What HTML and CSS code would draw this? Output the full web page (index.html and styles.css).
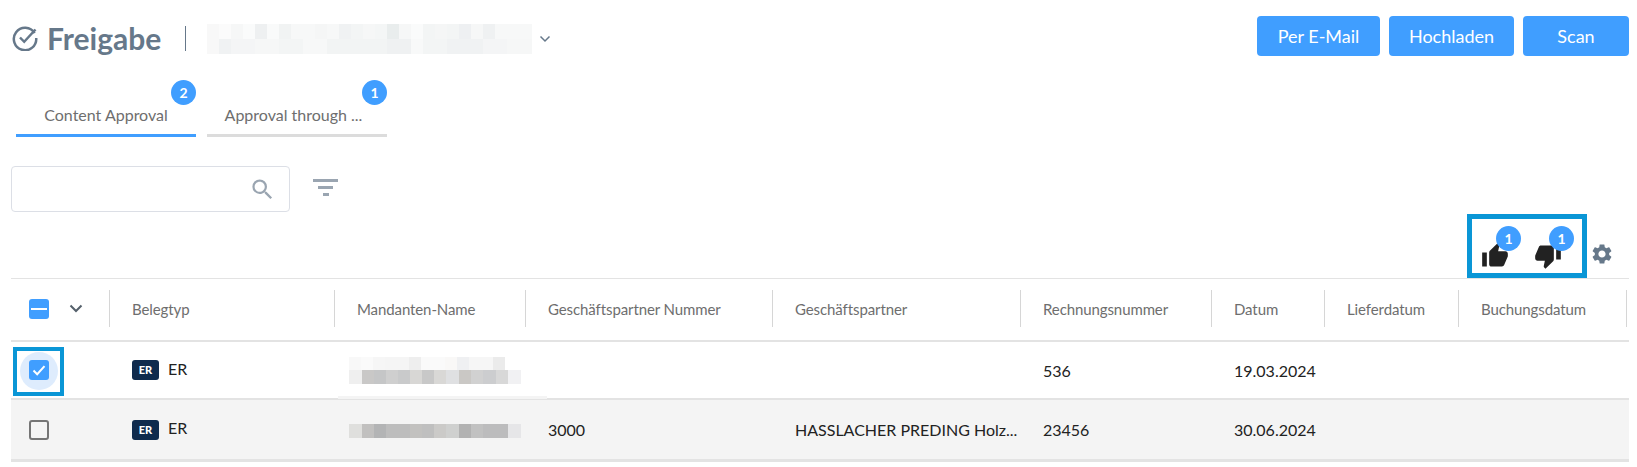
FILE: index.html
```html
<!doctype html>
<html>
<head>
<meta charset="utf-8">
<title>Freigabe</title>
<link rel="stylesheet" href="styles.css">
</head>
<body>

<header class="topbar">
    <svg class="title-icon" viewBox="0 0 26 26"><path d="M22.6 8.2A11.2 11.2 0 1 0 24.2 13"/><path d="M8 12.5l4.2 4.3L23.5 4.5"/></svg>
    <h1>Freigabe</h1>
    <span class="title-sep"></span>
    <span class="blur blur-title"></span>
    <svg class="title-chevron" viewBox="0 0 12 8"><path d="M1.5 1.5L6 6l4.5-4.5"/></svg>
    <div class="actions">
        <button class="btn btn-mail">Per E-Mail</button>
        <button class="btn btn-upload">Hochladen</button>
        <button class="btn btn-scan">Scan</button>
    </div>
</header>

<nav class="tabs">
    <div class="tab active">Content Approval<span class="badge">2</span></div>
    <div class="tab">Approval through ...<span class="badge">1</span></div>
</nav>

<section class="filters">
    <div class="search">
        <svg class="search-icon" viewBox="0 0 24 24"><path d="M15.5 14h-.79l-.28-.27A6.47 6.47 0 0 0 16 9.5 6.5 6.5 0 1 0 9.5 16c1.61 0 3.09-.59 4.23-1.57l.27.28v.79l5 4.99L20.49 19l-4.99-5zm-6 0C7.01 14 5 11.99 5 9.5S7.01 5 9.5 5 14 7.01 14 9.5 11.99 14 9.5 14z"/></svg>
    </div>
    <div class="filter-icon"><span></span><span></span><span></span></div>
</section>

<section class="toolbar">
    <div class="vote-box">
        <div class="vote">
            <svg viewBox="0 0 24 24"><path d="M1 21h4V9H1v12zm22-11c0-1.1-.9-2-2-2h-6.31l.95-4.57.03-.32c0-.41-.17-.79-.44-1.06L14.17 1 7.59 7.59C7.22 7.95 7 8.45 7 9v10c0 1.1.9 2 2 2h9c.83 0 1.54-.5 1.84-1.22l3.02-7.05c.09-.23.14-.47.14-.73v-2z"/></svg>
            <span class="badge">1</span>
        </div>
        <div class="vote">
            <svg viewBox="0 0 24 24"><path d="M15 3H6c-.83 0-1.54.5-1.84 1.22l-3.02 7.05c-.09.23-.14.47-.14.73v2c0 1.1.9 2 2 2h6.31l-.95 4.57-.03.32c0 .41.17.79.44 1.06L9.83 23l6.59-6.59c.36-.36.58-.86.58-1.41V5c0-1.1-.9-2-2-2zm4 0v12h4V3h-4z"/></svg>
            <span class="badge">1</span>
        </div>
    </div>
    <svg class="gear" viewBox="0 0 24 24"><path d="M19.14 12.94c.04-.3.06-.61.06-.94 0-.32-.02-.64-.07-.94l2.03-1.58c.18-.14.23-.41.12-.61l-1.92-3.32c-.12-.22-.37-.29-.59-.22l-2.39.96c-.5-.38-1.03-.7-1.62-.94l-.36-2.54c-.04-.24-.24-.41-.48-.41h-3.84c-.24 0-.43.17-.47.41l-.36 2.54c-.59.24-1.13.57-1.62.94l-2.39-.96c-.22-.08-.47 0-.59.22L2.74 8.87c-.12.21-.08.47.12.61l2.03 1.58c-.05.3-.09.63-.09.94s.02.64.07.94l-2.03 1.58c-.18.14-.23.41-.12.61l1.92 3.32c.12.22.37.29.59.22l2.39-.96c.5.38 1.03.7 1.62.94l.36 2.54c.05.24.24.41.48.41h3.84c.24 0 .44-.17.47-.41l.36-2.54c.59-.24 1.13-.56 1.62-.94l2.39.96c.22.08.47 0 .59-.22l1.92-3.32c.12-.22.07-.47-.12-.61l-2.01-1.58zM12 15.6c-1.98 0-3.6-1.62-3.6-3.6s1.62-3.6 3.6-3.6 3.6 1.62 3.6 3.6-1.62 3.6-3.6 3.6z"/></svg>
</section>

<section class="grid">
    <div class="row head">
        <div class="cell"><span class="check check-some"><span class="dash"></span></span>
            <svg class="head-chevron" viewBox="0 0 14 9"><path d="M1.5 1.5L7 7l5.5-5.5"/></svg></div>
        <div class="cell">Belegtyp</div>
        <div class="cell">Mandanten-Name</div>
        <div class="cell">Geschäftspartner Nummer</div>
        <div class="cell">Geschäftspartner</div>
        <div class="cell">Rechnungsnummer</div>
        <div class="cell">Datum</div>
        <div class="cell">Lieferdatum</div>
        <div class="cell">Buchungsdatum</div>
    </div>

    <div class="row item">
        <div class="cell">
            <span class="check-halo"></span>
            <span class="check check-on"><svg viewBox="0 0 20 20"><path d="M4.5 10.5l3.7 3.7 7.3-8"/></svg></span>
            <span class="check-box"></span>
        </div>
        <div class="cell type"><span class="type-tag">ER</span><span class="type-name">ER</span></div>
        <div class="cell"><span class="blur blur-client-a"></span><span class="smudge"></span></div>
        <div class="cell"></div>
        <div class="cell"></div>
        <div class="cell">536</div>
        <div class="cell">19.03.2024</div>
        <div class="cell"></div>
        <div class="cell"></div>
    </div>

    <div class="row item alt">
        <div class="cell"><span class="check check-off"></span></div>
        <div class="cell type"><span class="type-tag">ER</span><span class="type-name">ER</span></div>
        <div class="cell"><span class="blur blur-client-b"></span></div>
        <div class="cell">3000</div>
        <div class="cell">HASSLACHER PREDING Holz...</div>
        <div class="cell">23456</div>
        <div class="cell">30.06.2024</div>
        <div class="cell"></div>
        <div class="cell"></div>
    </div>
</section>

</body>
</html>
```

FILE: styles.css
```css
* { box-sizing: border-box; }
body { margin: 0; padding: 0; font-family: Lato, "Open Sans", sans-serif; color: #222; background-color: #fff; }

/* top bar */
.topbar { display: flex; align-items: center; height: 40px; margin: 16px 8px 0 12px; }
.title-icon { width: 26px; height: 26px; margin-top: 4px; fill: none; stroke: #66788a; stroke-width: 2.5; }
h1 { margin: 4px 0 0 9px; font-size: 30px; font-weight: 700; color: #66788a; }
.title-sep { width: 1px; height: 25px; margin: 4px 21px 0 24px; background-color: #66788a; }
.blur { display: block; background-repeat: no-repeat; }
.blur-title {
    width: 325px; height: 30px; margin-top: 5px;
    background-size: 325px 15px;
    background-position: 0 0, 0 15px;
    background-image:
        linear-gradient(90deg, #f8f8f8 0 12px, #fbfbfb 12px 24px, #f6f7f7 24px 36px, #fafbfb 36px 48px, #eef0f1 48px 60px, #f9fafa 60px 72px, #f1f3f3 72px 84px, #f7f8f8 84px 96px, #f7f8f8 96px 108px, #f5f6f6 108px 120px, #f7f8f8 120px 132px, #f0f2f3 132px 144px, #f3f5f5 144px 156px, #f6f7f7 156px 168px, #f4f6f6 168px 180px, #e9eded 180px 192px, #f6f7f7 192px 204px, #fafbfb 204px 216px, #f3f5f5 216px 228px, #f5f6f6 228px 240px, #f3f5f5 240px 252px, #eef0f2 252px 264px, #f6f7f7 264px 276px, #eff1f2 276px 288px, #f7f8f8 288px 325px),
        linear-gradient(90deg, #f8f8f8 0 12px, #f0f2f3 12px 24px, #f4f5f6 24px 48px, #f6f7f7 48px 72px, #f3f5f5 72px 96px, #f7f8f8 96px 120px, #f2f4f4 120px 180px, #eff1f2 180px 204px, #f8f9f9 204px 216px, #f3f5f5 216px 240px, #f0f2f3 240px 276px, #f4f5f6 276px 300px, #f6f7f7 300px 325px);
}
.title-chevron { width: 12px; height: 8px; margin: 5px 0 0 7px; fill: none; stroke: #66788a; stroke-width: 1.5; }
.actions { display: flex; gap: 9px; margin-left: auto; }
.btn { height: 40px; border: 0; border-radius: 4px; background-color: #409eff; color: #fff; font: 400 18px Lato, sans-serif; }
.btn-mail { width: 123px; }
.btn-upload { width: 125px; }
.btn-scan { width: 106px; }

/* tabs */
.tabs { display: flex; gap: 11px; margin: 24px 0 0 16px; }
.tab { position: relative; width: 180px; height: 57px; padding: 25px 7px 0 0; border-bottom: 3px solid #dcdcdc; text-align: center; font-size: 16px; color: #6e6e6e; }
.tab.active { padding-right: 0; border-bottom-color: #409eff; }
.badge { position: absolute; top: 0; right: 0; width: 25px; height: 25px; border-radius: 50%; background-color: #409eff; color: #fff; font-size: 14px; font-weight: 700; line-height: 25px; text-align: center; }

/* search + filter */
.filters { display: flex; align-items: center; margin: 29px 0 0 11px; }
.search { display: flex; justify-content: flex-end; align-items: center; width: 279px; height: 46px; padding-right: 13px; border: 1px solid #dcdfe6; border-radius: 4px; }
.search-icon { width: 27px; height: 27px; fill: #9aa5b1; }
.filter-icon { display: flex; flex-direction: column; align-items: center; gap: 4px; width: 25px; margin-left: 23px; margin-top: -4px; }
.filter-icon span { height: 3px; background-color: #9aa5b1; }
.filter-icon span:nth-child(1) { width: 25px; }
.filter-icon span:nth-child(2) { width: 15px; }
.filter-icon span:nth-child(3) { width: 6px; }

/* thumbs + settings */
.toolbar { display: flex; align-items: flex-end; justify-content: flex-end; height: 64px; margin: 2px 20px 0 0; }
.vote-box { display: flex; gap: 25px; width: 120px; height: 64px; margin-right: 3px; padding: 14px 0 0 9px; border: 5px solid #0a96d6; }
.vote { position: relative; width: 28px; height: 28px; margin-top: 9px; }
.vote svg { display: block; width: 28px; height: 28px; fill: #222; }
.vote .badge { top: -16px; right: -12px; }
.gear { width: 24px; height: 24px; margin: 0 3px 12px 0; fill: #66788a; }

/* table */
.grid { margin-left: 11px; width: 1618px; border-top: 1px solid #e3e3e3; }
.row { display: grid; grid-template-columns: 99px 225px 191px 247px 248px 191px 113px 134px 170px; }
.head { height: 63px; align-items: center; padding-bottom: 2px; border-bottom: 2px solid #e3e3e3; font-size: 15px; letter-spacing: -0.1px; color: #6e6e6e; }
.head .cell { height: 37px; border-right: 1px solid #d6d6d6; }
.head .cell:last-child { margin-right: 2px; }
.item { height: 58px; border-bottom: 2px solid #e3e3e3; font-size: 16px; align-items: center; }
.item.alt { height: 62px; background-color: #f4f4f4; border-bottom-width: 3px; }
.cell { display: flex; align-items: center; min-width: 0; padding-left: 22px; position: relative; white-space: nowrap; }
.row .cell:first-child { padding-left: 18px; }

.check { display: flex; align-items: center; justify-content: center; flex: none; width: 20px; height: 20px; border-radius: 3px; position: relative; }
.check-some, .check-on { background-color: #409eff; }
.dash { width: 16px; height: 2px; background-color: #fff; }
.check-on svg { width: 20px; height: 20px; fill: none; stroke: #fff; stroke-width: 2; }
.check-off { border: 2px solid #757575; }
.head-chevron { width: 14px; height: 9px; margin-left: 20px; fill: none; stroke: #55606b; stroke-width: 2; }
.check-halo { position: absolute; left: 9px; top: -8px; width: 38px; height: 38px; border-radius: 50%; background-color: #deecfd; }
.check-box { position: absolute; left: 2px; top: -13px; width: 51px; height: 49px; border: 4px solid #0a96d6; }

.type { align-items: center; }
.type-tag { width: 27px; height: 20px; border-radius: 3px; background-color: #0f2b4d; color: #fff; font-size: 11px; font-weight: 900; line-height: 20px; text-align: center; }
.type-name { margin: -4px 0 0 9px; }

.blur-client-a {
    width: 172px; height: 27px; margin: 1px 0 0 -8px;
    background-size: 172px 13px, 172px 14px;
    background-position: 0 0, 0 13px;
    background-image:
        linear-gradient(90deg, #f8f8f8 0 12px, #fafafa 12px 24px, #f6f6f6 24px 36px, #f5f5f5 36px 60px, #eeeeee 60px 72px, #fafafa 72px 96px, #f9f8f7 96px 108px, #eff0f2 108px 120px, #f6f6f6 120px 144px, #ebebeb 144px 156px, #fff 156px 172px),
        linear-gradient(90deg, #efefef 0 13px, #c9c8c7 13px 25px, #c5c6c7 25px 37px, #cfcfcf 37px 49px, #c9cacb 49px 61px, #d8d7d5 61px 73px, #c8c8c8 73px 85px, #d9d8d6 85px 97px, #dfe0e2 97px 110px, #cac8c5 110px 122px, #d1d1d1 122px 134px, #cccdcf 134px 147px, #d8d8d8 147px 159px, #f1f1f3 159px 172px);
}
.blur-client-b {
    width: 172px; height: 14px; margin: 2px 0 0 -8px;
    background-image: linear-gradient(90deg, #dfdfdd 0 13px, #c1c0bf 13px 25px, #b3b4b5 25px 37px, #bdbdbd 37px 61px, #c2c1bf 61px 73px, #bfbfbf 73px 85px, #cbcac8 85px 97px, #cfd0cf 97px 110px, #b2b2b2 110px 122px, #c1c1c1 122px 134px, #bcbcbd 134px 159px, #e6e6e8 159px 172px);
}
.smudge { position: absolute; left: 3px; top: 40px; width: 209px; height: 3px; background-color: #f4f4f4; }
```
